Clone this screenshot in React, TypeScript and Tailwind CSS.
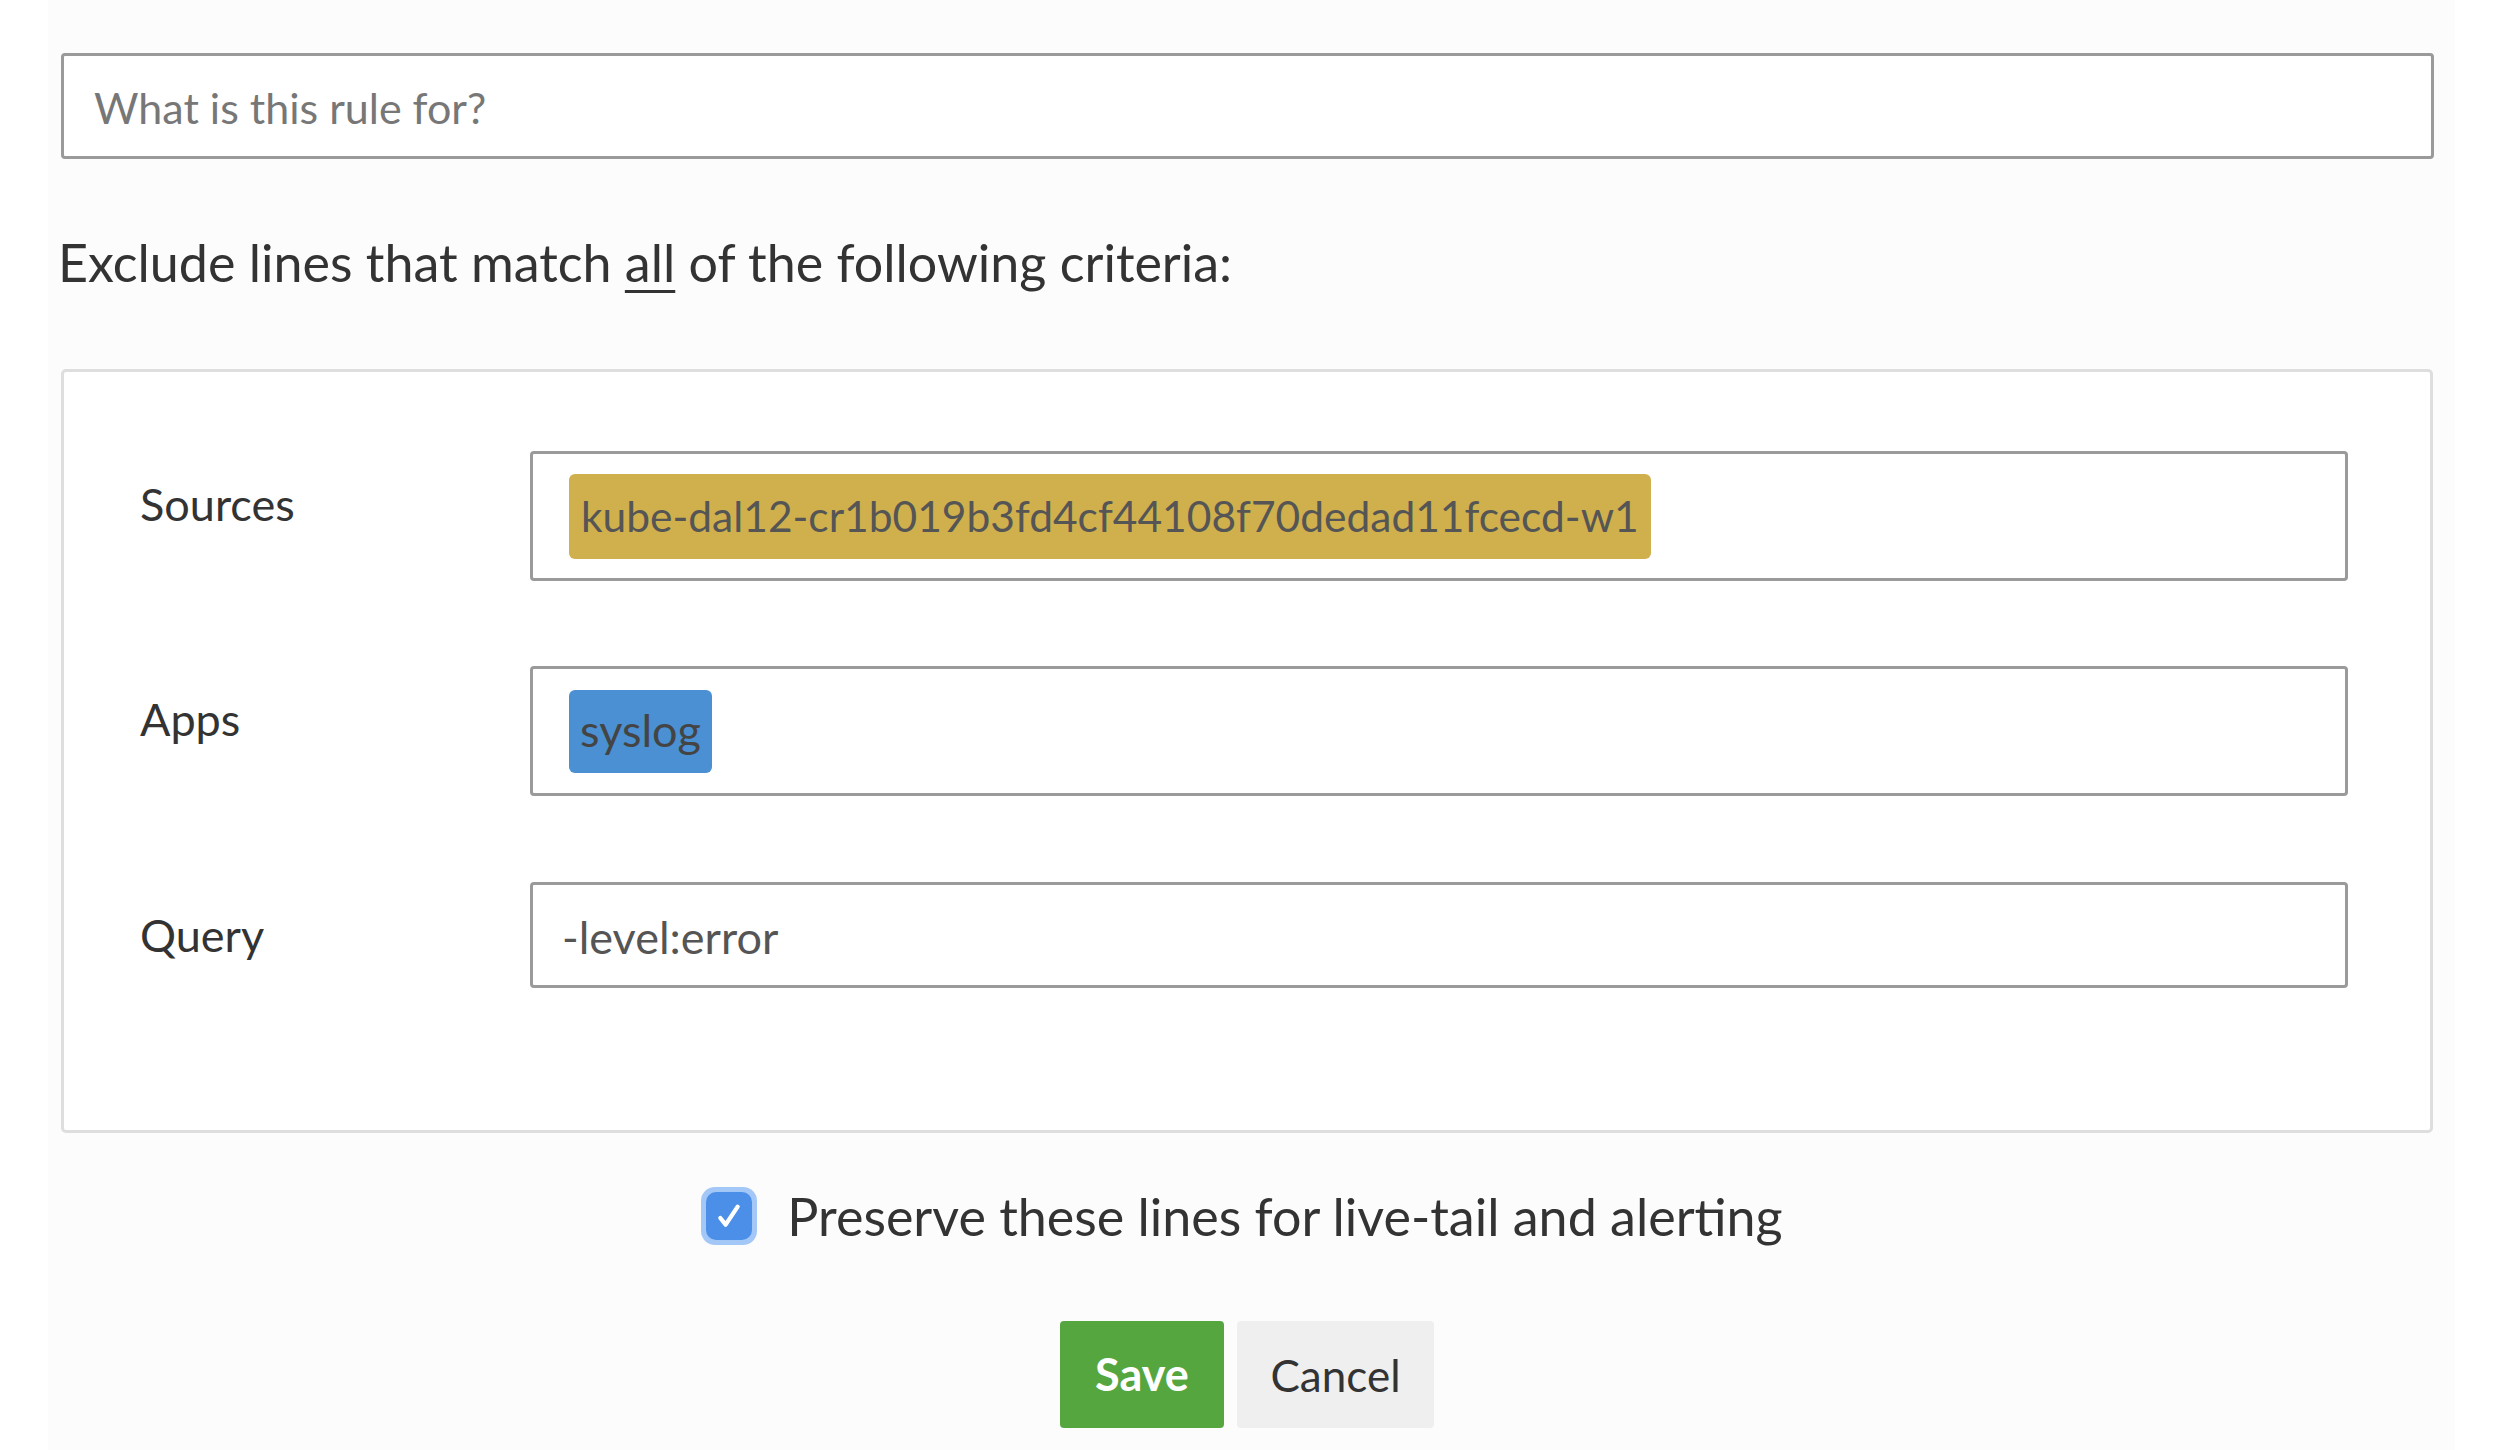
import React from "react";

export default function App() {
  const font = { fontFamily: "Lato, 'Open Sans', sans-serif" };
  return (
    <div className="w-[2516px] h-[1450px] bg-white overflow-hidden" style={font}>
      <div className="ml-[48px] w-[2407px] h-[1450px] bg-[#fcfcfc] pl-[13px] pt-[53px] flex flex-col">
        <div className="w-[2373px] h-[106px] border-[3px] border-[#9a9a9a] rounded-[4px] bg-white flex items-center pl-[30px] pt-[4px]">
          <span className="text-[43px] text-[#777]">What is this rule for?</span>
        </div>
        <h2 className="mt-[73px] h-[60px] leading-[60px] text-[52px] text-[#333] -ml-[3px]">
          Exclude lines that match <span className="underline underline-offset-[8px] decoration-[3px]">all</span> of the following criteria:
        </h2>
        <div className="mt-[77px] w-[2372px] h-[764px] border-[3px] border-[#dedede] rounded-[5px] bg-white pl-[76px] pt-[79px] flex flex-col">
          <div className="flex h-[130px]">
            <div className="w-[390px] pt-[23px] h-[60px] leading-[60px] text-[45px] text-[#333]">Sources</div>
            <div className="w-[1818px] h-[130px] border-[3px] border-[#9a9a9a] rounded-[4px] bg-white flex items-center pl-[36px]">
              <span className="h-[85px] w-[1082px] rounded-[6px] bg-[#cfb04d] text-[#555] text-[42.5px] flex items-center px-[12px] whitespace-nowrap">
                kube-dal12-cr1b019b3fd4cf44108f70dedad11fcecd-w1
              </span>
            </div>
          </div>
          <div className="flex h-[130px] mt-[85px]">
            <div className="w-[390px] pt-[23px] h-[60px] leading-[60px] text-[45px] text-[#333]">Apps</div>
            <div className="w-[1818px] h-[130px] border-[3px] border-[#9a9a9a] rounded-[4px] bg-white flex items-center pl-[36px]">
              <span className="h-[83px] w-[143px] rounded-[6px] bg-[#4a90d2] text-[#444] text-[45px] flex items-center justify-center">
                syslog
              </span>
            </div>
          </div>
          <div className="flex h-[106px] mt-[86px]">
            <div className="w-[390px] pt-[23px] h-[60px] leading-[60px] text-[45px] text-[#333]">Query</div>
            <div className="w-[1818px] h-[106px] border-[3px] border-[#9a9a9a] rounded-[4px] bg-white flex items-center pl-[29px] pt-[6px]">
              <span className="text-[45px] text-[#555]">-level:error</span>
            </div>
          </div>
        </div>
        <div className="w-[2372px] h-[60px] flex justify-center items-center mt-[53px] gap-[30px] pr-[10px]">
          <div className="w-[56px] h-[58px] rounded-[14px] bg-[#a3c7f6] flex items-center justify-center">
            <div className="w-[46px] h-[48px] rounded-[10px] bg-[#4b8fe9] flex items-center justify-center">
              <svg width="32" height="32" viewBox="0 0 24 24" fill="none" stroke="white" strokeWidth="3.2" strokeLinecap="round" strokeLinejoin="round">
                <path d="M5.5 13.5l4 5L18.5 5" />
              </svg>
            </div>
          </div>
          <span className="text-[52px] leading-[60px] text-[#333]">Preserve these lines for live-tail and alerting</span>
        </div>
        <div className="w-[2372px] flex justify-center mt-[75px] gap-[13px]">
          <button className="w-[164px] h-[107px] rounded-[4px] bg-[#56a640] text-white text-[45px] font-bold">Save</button>
          <button className="w-[197px] h-[107px] rounded-[4px] bg-[#efefef] text-[#333] text-[44px]">Cancel</button>
        </div>
      </div>
    </div>
  );
}
